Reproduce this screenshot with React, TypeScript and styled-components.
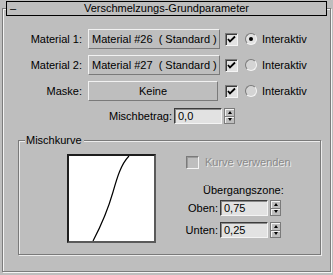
import styled, { createGlobalStyle } from "styled-components";

const GlobalStyle = createGlobalStyle`
  html, body {
    margin: 0;
    padding: 0;
    background: #bebebe;
  }
  body {
    font-family: "Liberation Sans", Arial, sans-serif;
    font-size: 11px;
    color: #000;
  }
`;

const Root = styled.div`
  width: 333px;
  height: 275px;
  padding-top: 1px;
  box-sizing: border-box;
  overflow: hidden;
`;

const TitleBar = styled.div`
  position: relative;
  z-index: 1;
  margin: 0 6px;
  height: 15px;
  box-sizing: border-box;
  border: 1px solid #000;
  background: #bebebe;
  display: grid;
  grid-template-columns: 1fr auto 1fr;
  align-items: center;
  line-height: 13px;
`;

const Minus = styled.span`
  padding-left: 3px;
`;

const Panel = styled.div`
  margin: -8px 2px 0;
  height: 264px;
  box-sizing: border-box;
  border: 1px solid #7c7c7c;
  box-shadow: inset 1px 1px 0 #f4f4f4, 1px 1px 0 #f4f4f4;
  padding: 20px 0 0 0;
`;

const Rows = styled.div`
  display: flex;
  flex-direction: column;
  gap: 6px;
`;

const Row = styled.div`
  display: flex;
  align-items: center;
  height: 20px;
`;

const Label = styled.span<{ $w: number }>`
  width: ${({ $w }) => $w}px;
  flex: none;
  text-align: right;
  white-space: nowrap;
`;

const MatButton = styled.button<{ $w: number; $center?: boolean }>`
  margin-left: 6px;
  width: ${({ $w }) => $w}px;
  height: 20px;
  flex: none;
  box-sizing: border-box;
  border: 1px solid;
  border-color: #f2f2f2 #7a7a7a #7a7a7a #f2f2f2;
  background: #bebebe;
  font: inherit;
  color: #000;
  padding: 0 3px;
  text-align: ${({ $center }) => ($center ? "center" : "left")};
  white-space: pre;
`;

const CheckBox = styled.span<{ $disabled?: boolean; $ml?: number }>`
  margin-left: ${({ $ml }) => $ml ?? 0}px;
  width: 13px;
  height: 13px;
  flex: none;
  box-sizing: border-box;
  border: 1px solid;
  border-color: #7a7a7a #f4f4f4 #f4f4f4 #7a7a7a;
  box-shadow: inset 1px 1px 0 ${({ $disabled }) => ($disabled ? "#9a9a9a" : "#3c3c3c")};
  background: ${({ $disabled }) => ($disabled ? "#bebebe" : "#e2e2e2")};
  display: flex;
  align-items: center;
  justify-content: center;
`;

const Radio = styled.span<{ $on?: boolean }>`
  margin-left: 7px;
  width: 12px;
  height: 12px;
  flex: none;
  box-sizing: border-box;
  border-radius: 50%;
  border: 1px solid;
  border-color: #7a7a7a #f4f4f4 #f4f4f4 #7a7a7a;
  background: ${({ $on }) => ($on ? "#e2e2e2" : "#d4d4d4")};
  display: flex;
  align-items: center;
  justify-content: center;

  &::after {
    content: "";
    width: 4px;
    height: 4px;
    border-radius: 50%;
    background: ${({ $on }) => ($on ? "#000" : "transparent")};
  }
`;

const RadioText = styled.span`
  margin-left: 5px;
`;

const SpinRow = styled.div<{ $mt?: number }>`
  display: flex;
  align-items: center;
  height: 16px;
  margin-top: ${({ $mt }) => $mt ?? 0}px;
`;

const Field = styled.div`
  margin-left: 2px;
  width: 48px;
  height: 16px;
  flex: none;
  box-sizing: border-box;
  border: 1px solid;
  border-color: #3c3c3c #f4f4f4 #f4f4f4 #3c3c3c;
  box-shadow: inset 1px 1px 0 #8a8a8a;
  background: #e2e2e2;
  padding-left: 3px;
  line-height: 14px;
`;

const Spinner = styled.div`
  margin-left: 2px;
  width: 11px;
  height: 16px;
  flex: none;
  box-sizing: border-box;
  border: 1px solid #7a7a7a;
  display: flex;
  flex-direction: column;
`;

const SpinHalf = styled.div<{ $down?: boolean }>`
  flex: 1;
  display: flex;
  align-items: center;
  justify-content: center;
  box-shadow: inset 1px 1px 0 #f2f2f2;
  border-top: ${({ $down }) => ($down ? "1px solid #7a7a7a" : "none")};

  &::after {
    content: "";
    border-left: 2.5px solid transparent;
    border-right: 2.5px solid transparent;
    ${({ $down }) =>
      $down ? "border-top: 3px solid #000;" : "border-bottom: 3px solid #000;"}
  }
`;

const Group = styled.div`
  position: relative;
  margin: 16px 0 0 15px;
  width: 303px;
  height: 115px;
  box-sizing: border-box;
  border: 1px solid #7a7a7a;
  box-shadow: 1px 1px 0 #ececec, inset 1px 1px 0 #ececec;
  padding: 13px 0 0 48px;
  display: flex;
`;

const GroupLabel = styled.span`
  position: absolute;
  top: -7px;
  left: 6px;
  padding: 0 2px 0 1px;
  background: #bebebe;
  line-height: 13px;
`;

const CurveBox = styled.div`
  width: 89px;
  height: 89px;
  flex: none;
  box-sizing: border-box;
  border: 2px solid;
  border-color: #1e1e1e #5a5a5a #5a5a5a #1e1e1e;
  background: #fff;

  svg {
    display: block;
  }
`;

const Side = styled.div`
  margin: 2px 0 0 27px;
  display: flex;
  flex-direction: column;
`;

const CurveToggle = styled.div`
  display: flex;
  align-items: center;
  gap: 6px;
  padding-left: 3px;
  height: 12px;
`;

const Disabled = styled.span`
  color: #8a8a8a;
  text-shadow: 1px 1px 0 #ececec;
`;

const ZoneTitle = styled.div`
  margin-top: 16px;
  padding-left: 20px;
  line-height: 13px;
`;

const Check = () => (
  <svg width="9" height="9" viewBox="0 0 9 9">
    <path d="M1 4 L3 6.5 L8 1.5" fill="none" stroke="#000" strokeWidth="1.8" />
  </svg>
);

const materials = [
  { label: "Material 1:", text: "Material #26  ( Standard )", on: true, w: 132 },
  { label: "Material 2:", text: "Material #27  ( Standard )", on: false, w: 132 },
];

export default function App() {
  return (
    <Root>
      <GlobalStyle />
      <TitleBar>
        <Minus>–</Minus>
        <span>Verschmelzungs-Grundparameter</span>
        <span />
      </TitleBar>
      <Panel>
        <Rows>
          {materials.map((m) => (
            <Row key={m.label}>
              <Label $w={79}>{m.label}</Label>
              <MatButton $w={m.w}>{m.text}</MatButton>
              <CheckBox $ml={5}>
                <Check />
              </CheckBox>
              <Radio $on={m.on} />
              <RadioText>Interaktiv</RadioText>
            </Row>
          ))}
          <Row>
            <Label $w={79}>Maske:</Label>
            <MatButton $w={130} $center>
              Keine
            </MatButton>
            <CheckBox $ml={7}>
              <Check />
            </CheckBox>
            <Radio />
            <RadioText>Interaktiv</RadioText>
          </Row>
        </Rows>
        <SpinRow $mt={7}>
          <Label $w={169}>Mischbetrag:</Label>
          <Field>0,0</Field>
          <Spinner>
            <SpinHalf />
            <SpinHalf $down />
          </Spinner>
        </SpinRow>
        <Group>
          <GroupLabel>Mischkurve</GroupLabel>
          <CurveBox>
            <svg width="85" height="85" viewBox="0 0 85 85">
              <path
                d="M24 85 C 34 66, 40 50, 44 36 S 52 8, 60 0"
                fill="none"
                stroke="#000"
                strokeWidth="1.2"
              />
            </svg>
          </CurveBox>
          <Side>
            <CurveToggle>
              <CheckBox $disabled />
              <Disabled>Kurve verwenden</Disabled>
            </CurveToggle>
            <ZoneTitle>Übergangszone:</ZoneTitle>
            <SpinRow $mt={3}>
              <Label $w={35}>Oben:</Label>
              <Field>0,75</Field>
              <Spinner>
                <SpinHalf />
                <SpinHalf $down />
              </Spinner>
            </SpinRow>
            <SpinRow $mt={6}>
              <Label $w={35}>Unten:</Label>
              <Field>0,25</Field>
              <Spinner>
                <SpinHalf />
                <SpinHalf $down />
              </Spinner>
            </SpinRow>
          </Side>
        </Group>
      </Panel>
    </Root>
  );
}
